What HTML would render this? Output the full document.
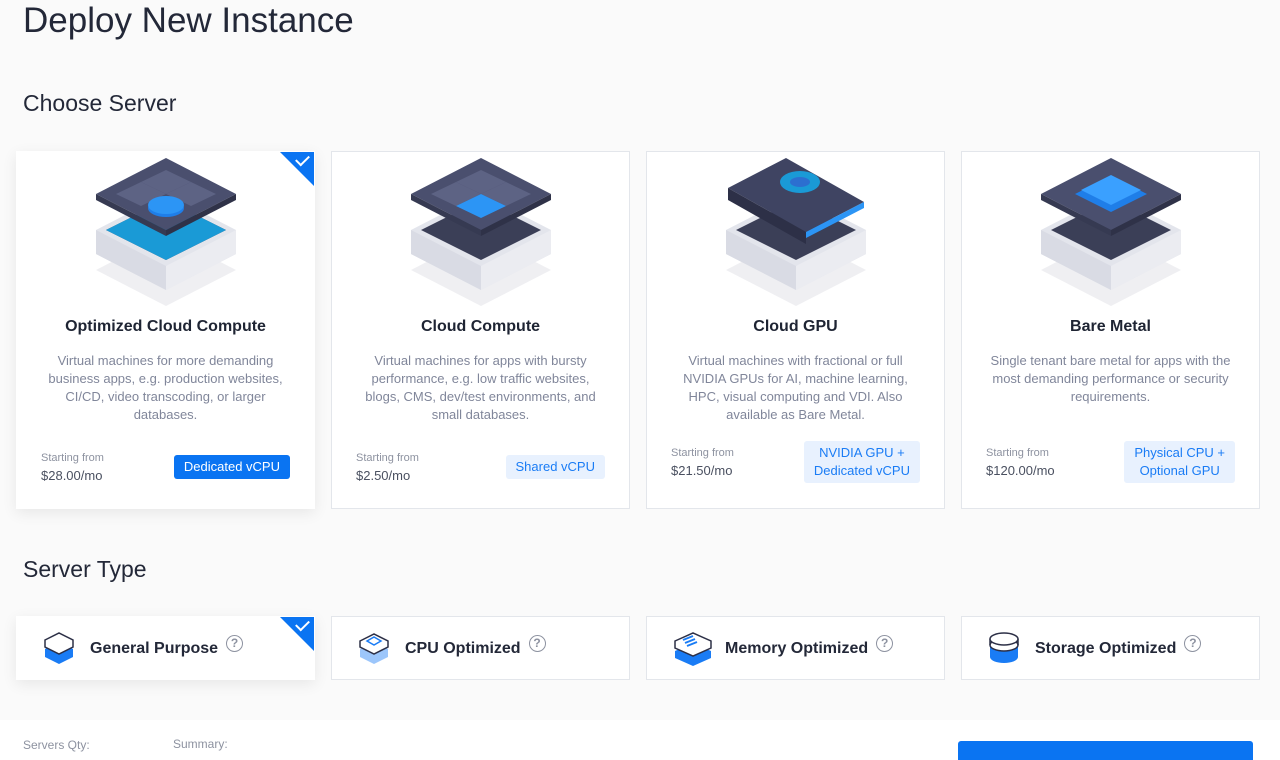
<!DOCTYPE html>
<html><head><meta charset="utf-8"><style>
*{margin:0;padding:0;box-sizing:border-box}
html,body{width:1280px;height:760px;overflow:hidden}
body{background:#fafafa;font-family:"Liberation Sans",sans-serif;color:#1e2433;position:relative}
h1{position:absolute;left:23px;top:1px;font-size:35px;font-weight:400;color:#232838}
h2{position:absolute;left:23px;font-size:23px;font-weight:400;color:#232838}
.card{position:absolute;top:151px;width:299px;height:358px;background:#fff;border:1px solid #e3e6eb;text-align:center}
.card.sel{border-color:#fff;box-shadow:0 4px 14px rgba(0,0,0,.08)}
.card svg.ill{position:absolute;left:79px;top:0}
.card .t{position:absolute;top:166px;left:0;right:0;font-size:16px;font-weight:700;color:#1e2433}
.card .d{position:absolute;top:200px;left:26px;right:26px;font-size:13px;line-height:18px;color:#80869a}
.sf{position:absolute;left:24px;font-size:11px;color:#8d92a0;text-align:left}
.pr{position:absolute;left:24px;font-size:13px;color:#4a5060;text-align:left}
.tag{position:absolute;right:24px;font-size:13px;line-height:18px;background:#e8f1fe;color:#1a7cf5;padding:3px 10px;border-radius:3px}
.tag.b{background:#0a74f2;color:#fff}
.chk{position:absolute;right:0;top:0;width:0;height:0;border-top:34px solid #0a74f2;border-left:34px solid transparent}
.chk:after{content:"";position:absolute;right:5px;top:-31px;width:11px;height:6px;border-left:2px solid #fff;border-bottom:2px solid #fff;transform:rotate(-45deg)}
.tc{position:absolute;top:616px;width:299px;height:64px;background:#fff;border:1px solid #e3e6eb}
.tc.sel{border-color:#fff;box-shadow:0 4px 14px rgba(0,0,0,.08)}
.tc .n{position:absolute;left:73px;top:23px;font-size:16px;font-weight:700;color:#232838}
.q{display:inline-block;width:17px;height:17px;border:1.5px solid #8d92a0;border-radius:50%;font-size:12px;line-height:14px;text-align:center;color:#8d92a0;font-weight:700;vertical-align:top;margin-left:8px;position:relative;top:-5px}
.tc svg{position:absolute;left:26px;top:14px}
.foot{position:absolute;left:0;top:720px;width:1280px;height:40px;background:#fff}
.foot span{position:absolute;top:18px;font-size:12px;color:#8d92a0}
.btn{position:absolute;left:958px;top:741px;width:295px;height:19px;background:#0a74f2;border-radius:3px 3px 0 0}
</style></head><body>
<h1>Deploy New Instance</h1>
<h2 style="top:90px">Choose Server</h2>

<svg width="0" height="0" style="position:absolute"><defs>
<g id="base">
<polygon points="0,108 70,72 140,108 70,144" fill="#efeff2"/>
<polygon points="0,68 70,32 140,68 140,92 70,128 0,92" fill="#e3e5ec"/>
<polygon points="0,68 70,104 70,128 0,92" fill="#d9dbe4"/>
<polygon points="70,104 140,68 140,92 70,128" fill="#ebecf1"/>
<polygon points="10,68 70,38 130,68 70,98" fill="#3b3f57"/>
</g>
</defs></svg>

<div class="card sel" style="left:16px">
<svg class="ill" width="142" height="160" viewBox="0 0 142 160"><use href="#base" y="10"/>
<polygon points="10,78 70,48 130,78 70,108" fill="#1a9ad6"/>
<polygon points="0,42 70,6 140,42 70,78" fill="#4a4f6e"/><polygon points="0,42 70,78 70,84 0,48" fill="#363a52"/><polygon points="70,78 140,42 140,48 70,84" fill="#2f3248"/>
<polygon points="45,30 70,18 95,30 70,42" fill="#5d6384"/><polygon points="20,42 45,30 70,42 45,54" fill="#5d6384"/><polygon points="70,42 95,30 120,42 95,54" fill="#5d6384"/>
<ellipse cx="70" cy="56" rx="18" ry="9" fill="#1f7ee8"/><ellipse cx="70" cy="53" rx="18" ry="9" fill="#2c95f5"/></svg>
<div class="chk"></div>
<div class="t">Optimized Cloud Compute</div>
<div class="d">Virtual machines for more demanding business apps, e.g. production websites, CI/CD, video transcoding, or larger databases.</div>
<div class="sf" style="top:300px">Starting from</div><div class="pr" style="top:316px">$28.00/mo</div>
<div class="tag b" style="top:303px">Dedicated vCPU</div>
</div>

<div class="card" style="left:331px">
<svg class="ill" width="142" height="160" viewBox="0 0 142 160"><use href="#base" y="10"/>
<polygon points="0,42 70,6 140,42 70,78" fill="#4a4f6e"/><polygon points="0,42 70,78 70,84 0,48" fill="#363a52"/><polygon points="70,78 140,42 140,48 70,84" fill="#2f3248"/>
<polygon points="45,30 70,18 95,30 70,42" fill="#5d6384"/><polygon points="20,42 45,30 70,42 45,54" fill="#5d6384"/><polygon points="95,54 70,42 95,30 120,42" fill="#5d6384"/><polygon points="45,54 70,42 95,54 70,66" fill="#2c95f5"/></svg>
<div class="t">Cloud Compute</div>
<div class="d">Virtual machines for apps with bursty performance, e.g. low traffic websites, blogs, CMS, dev/test environments, and small databases.</div>
<div class="sf" style="top:300px">Starting from</div><div class="pr" style="top:316px">$2.50/mo</div>
<div class="tag" style="top:303px">Shared vCPU</div>
</div>

<div class="card" style="left:646px">
<svg class="ill" width="142" height="160" viewBox="0 0 142 160"><use href="#base" y="10"/>
<polygon points="2,36 60,6 138,50 80,80" fill="#3f4462"/><polygon points="2,36 80,80 80,92 2,48" fill="#2d3047"/><polygon points="80,80 138,50 138,56 80,86" fill="#2c95f5"/>
<ellipse cx="74" cy="30" rx="20" ry="11" fill="#1a9ad6"/><ellipse cx="74" cy="30" rx="10" ry="5" fill="#2c6fd0"/></svg>
<div class="t">Cloud GPU</div>
<div class="d">Virtual machines with fractional or full NVIDIA GPUs for AI, machine learning, HPC, visual computing and VDI. Also available as Bare Metal.</div>
<div class="sf" style="top:295px">Starting from</div><div class="pr" style="top:311px">$21.50/mo</div>
<div class="tag" style="top:289px">NVIDIA GPU +<br>Dedicated vCPU</div>
</div>

<div class="card" style="left:961px">
<svg class="ill" width="142" height="160" viewBox="0 0 142 160"><use href="#base" y="10"/>
<polygon points="0,42 70,6 140,42 70,78" fill="#4a4f6e"/><polygon points="0,42 70,78 70,84 0,48" fill="#363a52"/><polygon points="70,78 140,42 140,48 70,84" fill="#2f3248"/>
<polygon points="34,42 70,24 106,42 70,60" fill="#1f7ee8"/><polygon points="40,38 70,23 100,38 70,53" fill="#3aa0ff"/></svg>
<div class="t">Bare Metal</div>
<div class="d">Single tenant bare metal for apps with the most demanding performance or security requirements.</div>
<div class="sf" style="top:295px">Starting from</div><div class="pr" style="top:311px">$120.00/mo</div>
<div class="tag" style="top:289px">Physical CPU +<br>Optional GPU</div>
</div>

<h2 style="top:556px">Server Type</h2>

<div class="tc sel" style="left:16px"><svg width="32" height="36" viewBox="0 0 32 36"><polygon points="2,18 16,11 30,18 30,26 16,33 2,26" fill="#1a7cf5"/><polygon points="2,9 16,2 30,9 30,16 16,23 2,16" fill="#fff" stroke="#2d3047" stroke-width="1.5"/></svg><div class="n">General Purpose<span class="q">?</span></div><div class="chk"></div></div>
<div class="tc" style="left:331px"><svg width="32" height="36" viewBox="0 0 32 36"><polygon points="2,18 16,11 30,18 30,26 16,33 2,26" fill="#9cc6fb"/><polygon points="2,10 16,3 30,10 30,16 16,23 2,16" fill="#fff" stroke="#2d3047" stroke-width="1.5"/><polygon points="9,10 16,6 23,10 16,14" fill="none" stroke="#1a7cf5" stroke-width="1.5"/></svg><div class="n">CPU Optimized<span class="q">?</span></div></div>
<div class="tc" style="left:646px"><svg width="40" height="36" viewBox="0 0 40 36"><polygon points="2,20 20,12 38,20 38,27 20,35 2,27" fill="#1a7cf5"/><polygon points="2,10 20,2 38,10 38,17 20,25 2,17" fill="#fff" stroke="#2d3047" stroke-width="1.5"/><path d="M10 9l10-4M12 12l10-4M14 15l10-4" stroke="#1a7cf5" stroke-width="2"/></svg><div class="n" style="left:78px">Memory Optimized<span class="q">?</span></div></div>
<div class="tc" style="left:961px"><svg width="32" height="36" viewBox="0 0 32 36"><ellipse cx="16" cy="26" rx="14" ry="6" fill="#1a7cf5"/><rect x="2" y="14" width="28" height="12" fill="#1a7cf5"/><ellipse cx="16" cy="14" rx="14" ry="6" fill="#fff" stroke="#2d3047" stroke-width="1.5"/><path d="M2 8v6M30 8v6" stroke="#2d3047" stroke-width="1.5"/><ellipse cx="16" cy="8" rx="14" ry="6" fill="#fff" stroke="#2d3047" stroke-width="1.5"/></svg><div class="n">Storage Optimized<span class="q">?</span></div></div>

<div class="foot"><span style="left:23px">Servers Qty:</span><span style="left:173px;top:17px">Summary:</span></div>
<div class="btn"></div>
</body></html>
